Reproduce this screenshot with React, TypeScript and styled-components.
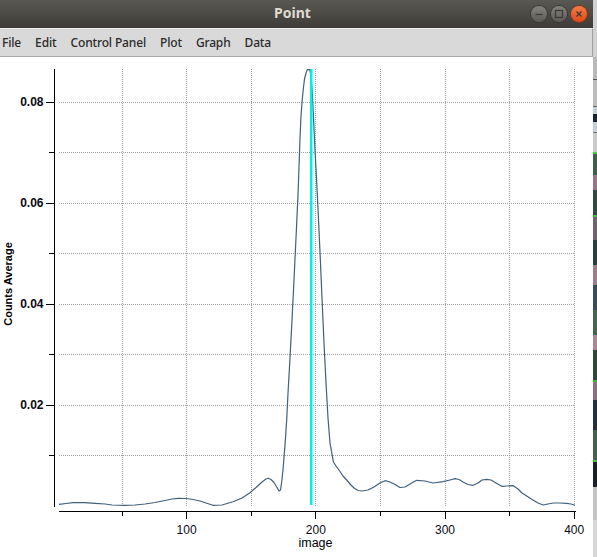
import styled, { createGlobalStyle } from 'styled-components'

// scales of the plot, in page pixels
const xPx = (v: number) => 57.4 + v * 1.292
const yPx = (v: number) => 506 - v * 5050
const crisp = (p: number) => Math.floor(p) + 0.5

const menus = ['File', 'Edit', 'Control Panel', 'Plot', 'Graph', 'Data']

const yMajor = [0.02, 0.04, 0.06, 0.08]
const yMinor = [0.01, 0.03, 0.05, 0.07]
const xMajor = [100, 200, 300, 400]
const xMinor = [50, 150, 250, 350]

// traced curve, page coordinates
const curve: [number, number][] = [
  [59, 504.3], [66, 503.5], [73, 502.7], [85, 502.7], [95, 503.3], [105, 504], [112, 505],
  [125, 505.3], [135, 505], [145, 504], [155, 502.5], [165, 500.5], [172, 499], [178, 498.3],
  [186, 498.5], [193, 499.5], [200, 501], [206, 503], [213, 505.3], [222, 505], [233, 501.7],
  [242, 498], [250, 492.7], [256, 487.5], [262, 482], [266, 479], [268.3, 478.3], [271, 479.5],
  [274, 482.5], [277, 487.5], [279, 491], [280.5, 490], [281.7, 482], [283, 470], [285, 445],
  [286.7, 420], [288, 393], [290, 358], [292, 320], [294, 280], [296, 238], [298, 195],
  [299, 167], [300, 138], [301, 116], [302.2, 100], [303.3, 89], [304.5, 79], [306, 73],
  [307.3, 69.6], [309.7, 69.6], [311, 76], [312.3, 93], [313.6, 120], [315, 150], [316.6, 180],
  [318.3, 215], [320, 252], [322, 298], [324, 343], [326, 383], [328, 418], [330, 443],
  [333.3, 461.7], [336, 466], [340, 471.5], [343, 476], [346.7, 480], [350, 484], [354, 488],
  [358, 490.5], [362, 491], [368, 490], [374, 487], [380, 483], [385, 480.7], [390, 482],
  [395, 484.5], [400, 487.5], [405, 487], [410, 484], [416.7, 480.3], [425, 481], [433, 483],
  [443, 481.7], [450, 480], [455, 478.7], [459, 479.5], [463, 482], [468, 484.5], [473, 485.3],
  [478, 483], [482, 480], [486.7, 479.3], [491, 480], [496, 483], [501.7, 486.3], [507, 486],
  [513.3, 485.7], [518, 489], [522, 493], [526.7, 496], [532, 499.5], [538, 503], [543.3, 505],
  [548, 504], [553.3, 503], [560, 503], [566.7, 503.3], [571, 504], [575, 505.3],
]

const GlobalStyle = createGlobalStyle`
  html, body {
    margin: 0;
    padding: 0;
    overflow: hidden;
    background: #cfcfcf;
  }
`

const App = () => {
  return (
    <>
      <GlobalStyle />
      <Desktop>
        <Window>
          <TitleBar>
            <span />
            <Title>Point</Title>
            <Controls>
              <ControlButton $kind="min">
                <svg width="16" height="16" viewBox="0 0 16 16">
                  <path d="M4.5 8.5h7" />
                </svg>
              </ControlButton>
              <ControlButton $kind="max">
                <svg width="16" height="16" viewBox="0 0 16 16">
                  <rect x="4.5" y="4.5" width="7" height="7" />
                </svg>
              </ControlButton>
              <ControlButton $kind="close">
                <svg width="16" height="16" viewBox="0 0 16 16">
                  <path d="M5.5 5.5l5 5M10.5 5.5l-5 5" />
                </svg>
              </ControlButton>
            </Controls>
          </TitleBar>

          <MenuBar>
            {menus.map((m) => (
              <MenuItem key={m}>{m}</MenuItem>
            ))}
          </MenuBar>

          <PlotArea>
            <Chart width="592" height="500" viewBox="0 57 592 500">
              {/* 網格 */}
              {[...yMajor, ...yMinor].map((v) => (
                <GridLine key={'h' + v} x1={59} x2={575} y1={crisp(yPx(v))} y2={crisp(yPx(v))} />
              ))}
              {[...xMajor, ...xMinor].map((v) => (
                <GridLine key={'v' + v} x1={crisp(xPx(v))} x2={crisp(xPx(v))} y1={69} y2={507} />
              ))}

              {/* 座標軸 */}
              <AxisLine x1={54.5} x2={54.5} y1={69} y2={507} />
              <AxisLine x1={59} x2={576} y1={511.5} y2={511.5} />
              {yMajor.map((v) => (
                <AxisLine key={'ym' + v} x1={46} x2={54} y1={crisp(yPx(v))} y2={crisp(yPx(v))} />
              ))}
              {yMinor.map((v) => (
                <AxisLine key={'yn' + v} x1={49} x2={54} y1={crisp(yPx(v))} y2={crisp(yPx(v))} />
              ))}
              {xMajor.map((v) => (
                <AxisLine key={'xm' + v} x1={crisp(xPx(v))} x2={crisp(xPx(v))} y1={511} y2={519} />
              ))}
              {xMinor.map((v) => (
                <AxisLine key={'xn' + v} x1={crisp(xPx(v))} x2={crisp(xPx(v))} y1={511} y2={516} />
              ))}

              {yMajor.map((v) => (
                <TickLabel key={'yl' + v} $bold x={43.5} y={yPx(v) + 4.3} textAnchor="end">
                  {v.toFixed(2)}
                </TickLabel>
              ))}
              {xMajor.map((v) => (
                <TickLabel key={'xl' + v} x={xPx(v)} y={533.5} textAnchor="middle">
                  {v}
                </TickLabel>
              ))}

              <AxisTitle x={315.5} y={547} textAnchor="middle">image</AxisTitle>
              <AxisTitle $bold transform="translate(11.5 284) rotate(-90)" textAnchor="middle">
                Counts Average
              </AxisTitle>

              {/* 資料曲線與標記 */}
              <Curve points={curve.map(([x, y]) => `${x},${y}`).join(' ')} />
              <Marker x1={311.2} x2={311.2} y1={69} y2={505} />
            </Chart>
          </PlotArea>
        </Window>
        <DesktopEdge />
      </Desktop>
    </>
  )
}

// 視窗外框
const Desktop = styled.div`
  display: flex;
  width: 597px;
  height: 557px;
  overflow: hidden;
`

const Window = styled.div`
  display: flex;
  flex-direction: column;
  width: 593px;
  height: 557px;
  flex: none;
`

const TitleBar = styled.div`
  display: grid;
  grid-template-columns: 1fr auto 1fr;
  align-items: center;
  height: 28px;
  padding-right: 6px;
  flex: none;
  background: linear-gradient(#5a5852, #3d3c38);
`

const Title = styled.div`
  font-family: 'Noto Sans', 'DejaVu Sans', sans-serif;
  font-weight: 700;
  font-size: 14px;
  line-height: 14px;
  color: #dfdbd2;
  padding: 0 2px 3px 0;
`

const Controls = styled.div`
  display: flex;
  justify-content: flex-end;
  gap: 4px;
`

const ControlButton = styled.div<{ $kind: 'min' | 'max' | 'close' }>`
  width: 16px;
  height: 16px;
  border-radius: 50%;
  box-sizing: border-box;
  display: flex;
  background: ${(p) =>
    p.$kind === 'close'
      ? 'linear-gradient(#f47a45, #dc4b18)'
      : 'linear-gradient(#85837d, #5c5a55)'};
  box-shadow: 0 0 0 1px ${(p) => (p.$kind === 'close' ? '#8c3514' : '#3a3934')};

  svg {
    fill: none;
    stroke: #3c3b37;
    stroke-width: 1.3;
  }
`

const MenuBar = styled.div`
  display: flex;
  align-items: center;
  gap: 14px;
  height: 29px;
  box-sizing: border-box;
  padding-left: 2px;
  flex: none;
  background: #d9d9d9;
  border-top: 1px solid #efefef;
  border-bottom: 1px solid #a9a9a9;
  border-right: 1px solid #a0a0a0;
`

const MenuItem = styled.span`
  font-family: 'Noto Sans', 'DejaVu Sans', sans-serif;
  font-size: 12px;
  font-weight: 500;
  letter-spacing: -0.15px;
  color: #2a2a2a;
`

const PlotArea = styled.div`
  flex: 1;
  background: #ffffff;
`

const Chart = styled.svg`
  display: block;
`

const GridLine = styled.line`
  stroke: #9e9e9e;
  stroke-width: 1;
  stroke-dasharray: 1 1;
  shape-rendering: crispEdges;
`

const AxisLine = styled.line`
  stroke: #000;
  stroke-width: 1;
  shape-rendering: crispEdges;
`

const TickLabel = styled.text<{ $bold?: boolean }>`
  font-family: 'Liberation Sans', Arial, sans-serif;
  font-size: 12px;
  font-weight: ${(p) => (p.$bold ? 700 : 400)};
  fill: #0a0a14;
`

const AxisTitle = styled.text<{ $bold?: boolean }>`
  font-family: 'Liberation Sans', Arial, sans-serif;
  font-size: ${(p) => (p.$bold ? '11px' : '12.5px')};
  font-weight: ${(p) => (p.$bold ? 700 : 400)};
  fill: #000;
`

const Curve = styled.polyline`
  fill: none;
  stroke: #40607b;
  stroke-width: 1.2;
  stroke-linejoin: round;
`

const Marker = styled.line`
  stroke: #00eeee;
  stroke-width: 2.5;
`

// 視窗右邊露出的桌面
const DesktopEdge = styled.div`
  width: 4px;
  height: 557px;
  flex: none;
  background: linear-gradient(
    #d2d2d2 0 57px,
    #b9b9b9 57px 79px,
    #555 79px 80px,
    #bdbdbd 80px 106px,
    #666 106px 107px,
    #c6ced8 107px 114px,
    #1c2433 114px 122px,
    #c6ced8 122px 132px,
    #777 132px 133px,
    #cacaca 133px 152px,
    #33dd33 152px 154px,
    #3c6048 154px 175px,
    #9a7482 175px 190px,
    #2f4a40 190px 215px,
    #2bd02b 215px 217px,
    #6e6470 217px 240px,
    #26423a 240px 265px,
    #a27a88 265px 285px,
    #334d5e 285px 310px,
    #3f6a4a 310px 335px,
    #b08492 335px 350px,
    #2c4838 350px 380px,
    #27c427 380px 382px,
    #8c7080 382px 400px,
    #22303f 400px 430px,
    #3e644c 430px 460px,
    #2bd02b 460px 462px,
    #1a1f28 462px 487px,
    #c4c4c4 487px 520px,
    #d6d6d6 520px
  );
`

export default App
